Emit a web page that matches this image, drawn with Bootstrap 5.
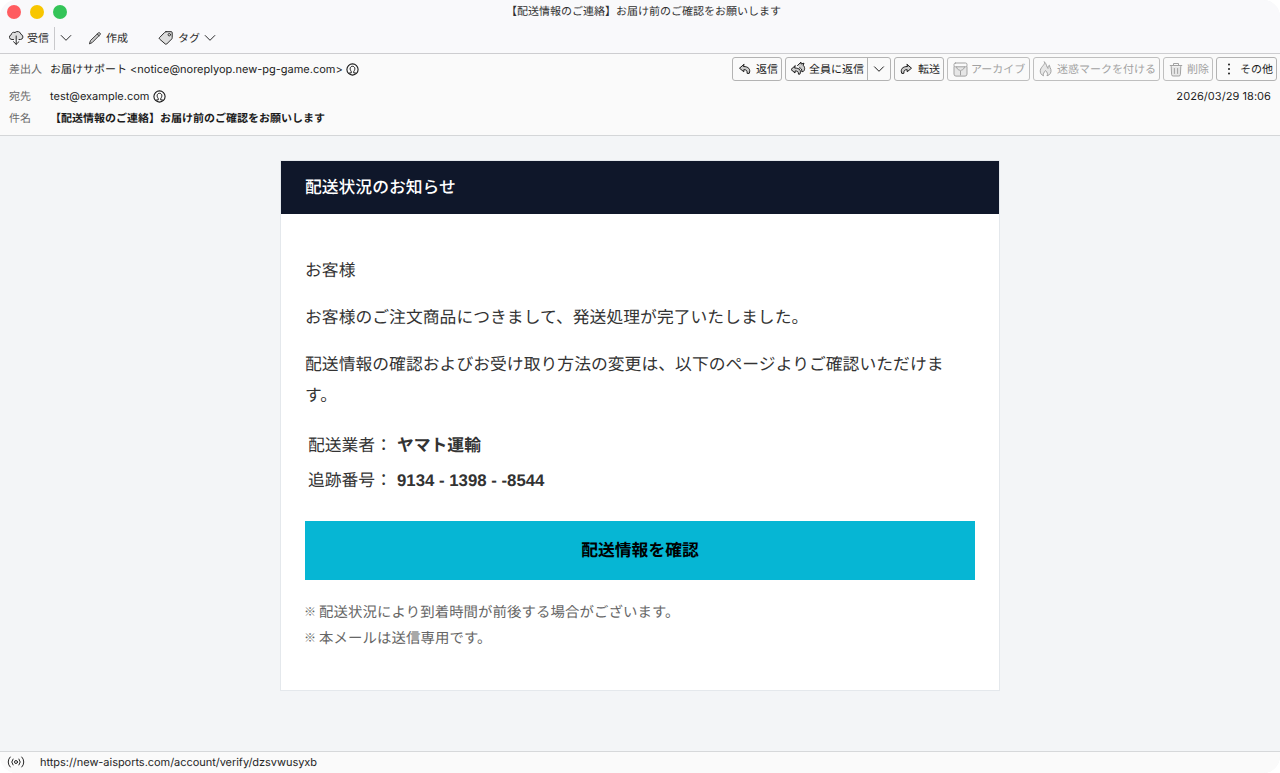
<!DOCTYPE html>
<html lang="ja">
<head>
<meta charset="utf-8">
<title>お届け前のご確認をお願いします</title>
<link href="https://cdn.jsdelivr.net/npm/bootstrap@5.3.0/dist/css/bootstrap.min.css" rel="stylesheet">
<style>
html,body{height:100%;overflow:hidden;background:#fff}
body{font-family:Inter,"Noto Sans CJK JP",sans-serif;font-size:11px;line-height:16px;color:#1b1b1b;text-rendering:geometricPrecision}
.window{height:773px;border-radius:17px;overflow:hidden;background:#f3f5f7}
.chrome{height:54px;background:#f9f9fb;border-bottom:1px solid #cdcdd0}
.titlebar{height:24px;padding-left:7px}
.titlebar .caption-text{padding-left:430px;line-height:20px;padding-bottom:2px;color:#303030}
.light{width:14px;height:14px;border-radius:50%;margin-right:9px}
.tools{height:28px;padding-left:8px;color:#2a2a2a}
.tools .sep{width:1px;height:23px;background:#c9c9cc}
.headers{height:82px;background:#fafafa;border-bottom:1px solid #d4d6d8}
.lbl{width:50px;padding-left:9px;color:#6b6b6b}
.act{height:24px;border:1px solid #b3b3b3;border-radius:3px;background:#fafafa;color:#1c1c1c;line-height:22px;padding:0 4px 0 5px;white-space:nowrap}
.act.off{color:#a2a2a2;border-color:#bfbfbf}
.split{border-left:1px solid #b3b3b3;height:22px;width:23px}
svg{display:block;flex:none;fill:none;stroke:currentColor;stroke-linecap:round;stroke-linejoin:round}
.paper{width:720px;height:531px;margin-top:24px;border:1px solid #e4e8ec;background:#fff;color:#333;font:16.8px/30.24px "Liberation Sans","Noto Sans CJK JP",sans-serif}
.head-band{height:53px;background:#0f172a;color:#fff;font-weight:500;padding-left:24px;line-height:53px}
.copy{padding:42px 24px 0}
.copy p{margin-bottom:17px;letter-spacing:.04px}
.copy p.wide{padding-right:16px}
.info{line-height:35px;padding-left:3px}
.info span{width:89px}
.cta{height:59px;margin-top:23px;background:#06b6d4;color:#000;font-weight:700;border-radius:0;line-height:59px;font-size:16.8px}
.notes{font-size:14.4px;line-height:25.92px;color:#666;margin-top:21px;letter-spacing:.1px}
.notes i{display:inline-block;width:14px;margin-left:-1px;margin-right:1px;font-size:12px;font-style:normal;vertical-align:1px;line-height:1}
.status{height:22px;background:#fafafa;border-top:1px solid #d6d8da;color:#262626;padding-bottom:1px}
</style>
</head>
<body>
<div class="window d-flex flex-column">
  <header class="chrome">
    <div class="titlebar d-flex align-items-center">
      <i class="light" style="background:#ff5c60"></i><i class="light" style="background:#f8c600"></i><i class="light" style="background:#34c458"></i>
      <span class="caption-text">【配送情報のご連絡】お届け前のご確認をお願いします</span>
    </div>
    <div class="tools d-flex align-items-center">
      <svg width="16" height="16" viewBox="0 0 16 16"><path fill="#ddd" d="M5.500 9.500H4a2.400 2.400 0 0 1-.8-4.700A3 3 0 0 1 7 2.500a3.600 3.600 0 0 1 6 1.900 2.600 2.600 0 0 1-.5 5.100H11"/><path d="M8.200 6v8.300M5.500 11.700l2.700 2.600 2.700-2.600"/></svg>
      <span style="margin-left:3px">受信</span><span class="sep" style="margin-left:5px"></span>
      <svg style="margin-left:5px" width="12" height="12" viewBox="0 0 12 12"><path d="M1.200 3.500L6 8.300l4.800-4.800"/></svg>
      <svg style="margin-left:16px" width="14" height="14" viewBox="0 0 14 14"><path fill="#ccc" stroke-width=".9" d="M1.500 12.500l1-3 7.900-7.600a1 1 0 0 1 1.400 0l.3.300a1 1 0 0 1 0 1.400L4.400 11.400z"/><path stroke-width=".9" d="M9.200 3l1.900 1.700"/></svg>
      <span style="margin-left:4px">作成</span>
      <svg style="margin-left:30px" width="16" height="16" viewBox="0 0 16 16"><path fill="#ddd" d="M8 1.700h5.200a1 1 0 0 1 1 1v5a2 2 0 0 1-.5 1.300l-5 5a1 1 0 0 1-1.400 0L1.500 9a1 1 0 0 1 0-1.400l5.200-5.200A2 2 0 0 1 8 1.700z"/><circle cx="11.300" cy="4.700" r="1.200" fill="#fff"/></svg>
      <span style="margin-left:4px">タグ</span>
      <svg style="margin-left:4px" width="12" height="12" viewBox="0 0 12 12"><path d="M1.200 3.500L6 8.300l4.800-4.800"/></svg>
    </div>
  </header>

  <section class="headers">
    <div class="d-flex align-items-center" style="height:30px;padding-right:3px">
      <span class="lbl">差出人</span><span>お届けサポート &lt;notice@noreplyop.new-pg-game.com&gt;</span>
      <svg style="margin-left:3px" width="13" height="13" viewBox="0 0 13 13"><circle cx="6.500" cy="6.500" r="5.600" stroke-width="1.100"/><path d="M3.500 10h1.700V8.300C3.400 6.300 4 3.300 6.500 3.300s3.100 3 1.300 5V10h1.700"/></svg>
      <div class="ms-auto d-flex" style="gap:3px">
        <div class="act d-flex align-items-center" style="width:50px"><svg width="14" height="14" viewBox="0 0 14 14" style="margin-right:4px"><path fill="#ccc" d="M5.800 2.500L1.500 6.200l4.300 3.600V7.700c2.400-.2 3.400.8 3.400 3.700h2c1.700-4.200-.8-6.900-5.400-6.900z"/></svg><span>返信</span></div>
        <div class="act d-flex align-items-center pe-0" style="width:106px"><svg width="16" height="16" viewBox="0 0 16 16" style="margin:0 3px 0 -1px"><path fill="#ccc" d="M7.500 4.500L11 1.200V3l3-.8-.9 2c2 1.800 2.100 4.700.1 6.400h-1.500c.4-2.300-.4-3.300-2.200-3.800"/><path fill="#ccc" d="M5 4.800L1 8.500 5 12v-2c2.500-.2 3.500.7 3.500 3.200h1.300c1.800-3.500 0-6.200-4.800-6.200z"/></svg><span class="flex-grow-1">全員に返信</span><span class="split d-flex align-items-center justify-content-center"><svg width="12" height="12" viewBox="0 0 12 12"><path d="M1.500 3.800L6 8.300l4.500-4.500"/></svg></span></div>
        <div class="act d-flex align-items-center" style="width:50px"><svg width="14" height="14" viewBox="0 0 14 14" style="margin:0 5px 0 -1px"><path fill="#ccc" d="M8.200 2.500l4.300 3.700-4.300 3.600V7.700c-2.400-.2-3.400.8-3.400 3.700h-2C1.100 7.200 3.600 4.500 8.200 4.500z"/></svg><span>転送</span></div>
        <div class="act off d-flex align-items-center" style="width:83px"><svg width="15" height="15" viewBox="0 0 15 15" style="margin-right:3px"><path fill="#e6e6e6" d="M1 4.800v7.300a2 2 0 0 0 2 2h9a2 2 0 0 0 2-2V4.800"/><rect x="1" y="1" width="13" height="3.800" rx="1.500"/><path d="M3.500 5c.3 1.500 1.200 2.700 2.800 3l1.200 1 1.200-1c1.600-.3 2.500-1.500 2.800-3M7.500 9v4"/></svg><span>アーカイブ</span></div>
        <div class="act off d-flex align-items-center" style="width:127px"><svg width="14" height="16" viewBox="0 0 14 16" style="margin-right:4px"><path fill="#e6e6e6" d="M5.500 1c1.300 2.200-3.500 4.700-4.200 8.200C.8 12 2.500 14 4.500 14.800 3.800 12.500 5 11.700 6.500 9.500c2 2 2.400 3.300 1.500 5.300 3-.8 4.600-3.300 3.900-6.300-.3-1.500-1.400-2.400-1.600-4.300C9 5 9 6.200 9 7.500 7.500 6 7.600 2.500 5.500 1z"/></svg><span>迷惑マークを付ける</span></div>
        <div class="act off d-flex align-items-center" style="width:50px"><svg width="14" height="15" viewBox="0 0 14 15" style="margin-right:4px"><path fill="#e6e6e6" d="M2.200 4.500l.4 8a1.500 1.500 0 0 0 1.500 1.500h5.800a1.500 1.500 0 0 0 1.500-1.500l.4-8"/><path d="M1.200 3.500h11.600M4.500 3V1.500h5V3M5.400 6.500v5M8.600 6.500v5"/></svg><span>削除</span></div>
        <div class="act d-flex align-items-center justify-content-between" style="width:61px;padding:0 3px 0 10px"><svg width="4" height="12" viewBox="0 0 4 12" style="fill:currentColor;stroke:none"><circle cx="2" cy="1.500" r="1"/><circle cx="2" cy="6" r="1"/><circle cx="2" cy="10.500" r="1"/></svg><span>その他</span></div>
      </div>
    </div>
    <div class="d-flex align-items-center" style="height:24px;padding-right:9px">
      <span class="lbl">宛先</span><span>test@example.com</span>
      <svg style="margin-left:4px" width="13" height="13" viewBox="0 0 13 13"><circle cx="6.500" cy="6.500" r="5.600" stroke-width="1.100"/><path d="M3.500 10h1.700V8.300C3.400 6.300 4 3.300 6.500 3.300s3.100 3 1.300 5V10h1.700"/></svg>
      <span class="ms-auto" style="letter-spacing:.06px">2026/03/29 18:06</span>
    </div>
    <div class="d-flex align-items-center" style="height:20px"><span class="lbl">件名</span><span class="fw-bold">【配送情報のご連絡】お届け前のご確認をお願いします</span></div>
  </section>

  <main class="flex-grow-1">
    <article class="paper mx-auto">
      <div class="head-band">配送状況のお知らせ</div>
      <div class="copy">
        <p>お客様</p>
        <p>お客様のご注文商品につきまして、発送処理が完了いたしました。</p>
        <p class="wide">配送情報の確認およびお受け取り方法の変更は、以下のページよりご確認いただけます。</p>
        <div class="info d-flex"><span>配送業者：</span><b>ヤマト運輸</b></div>
        <div class="info d-flex"><span>追跡番号：</span><b>9134 - 1398 - -8544</b></div>
        <div class="cta btn d-block p-0 border-0">配送情報を確認</div>
        <div class="notes"><div><i>※</i>配送状況により到着時間が前後する場合がございます。</div><div><i>※</i>本メールは送信専用です。</div></div>
      </div>
    </article>
  </main>

  <footer class="status d-flex align-items-center">
    <svg style="margin-left:7px" width="18" height="14" viewBox="0 0 18 14"><circle cx="9" cy="7" r="1.500"/><path d="M6 4a4.500 4.500 0 0 0 0 6M12 4a4.500 4.500 0 0 1 0 6M3.200 2a7 7 0 0 0 0 10M14.800 2a7 7 0 0 1 0 10"/></svg>
    <span style="margin-left:15px;letter-spacing:-.04px">https://new-aisports.com/account/verify/dzsvwusyxb</span>
  </footer>
</div>
<script src="https://cdn.jsdelivr.net/npm/bootstrap@5.3.0/dist/js/bootstrap.bundle.min.js"></script>
</body>
</html>
